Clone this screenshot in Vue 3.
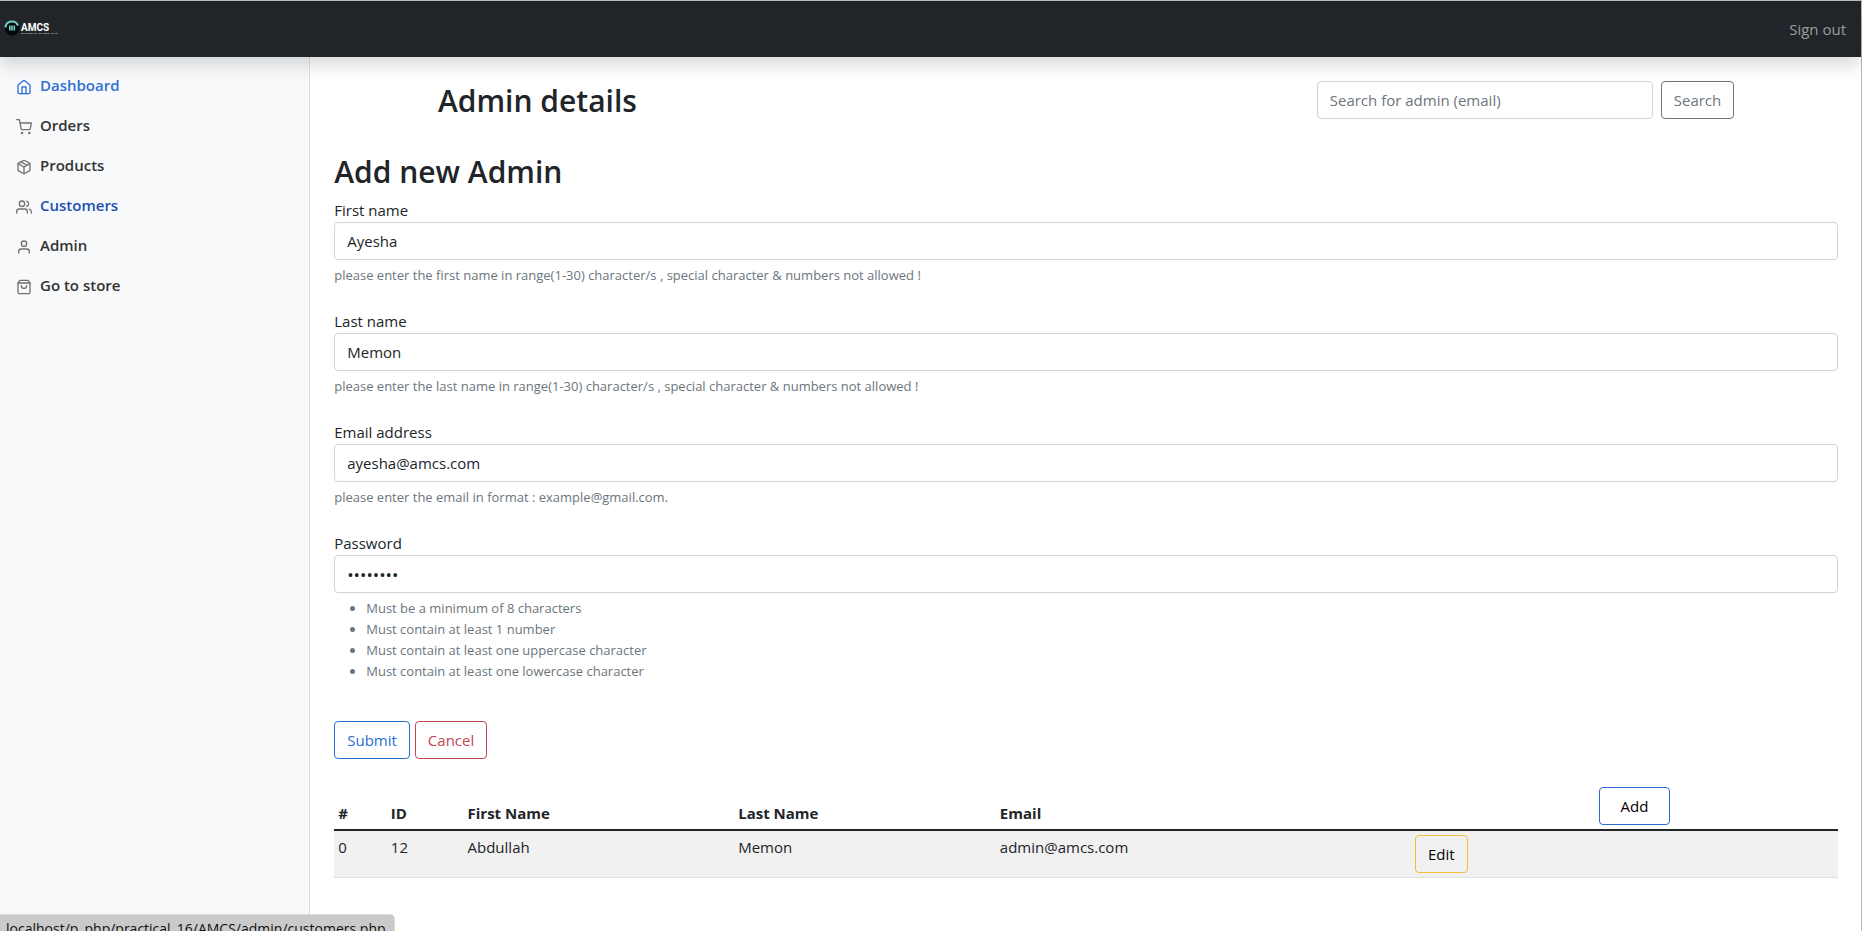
<script setup>
import { ref } from 'vue'

const links = [
  { label: 'Dashboard', state: 'active', paths: ['M3 9l9-7 9 7v11a2 2 0 0 1-2 2H5a2 2 0 0 1-2-2z', 'M9 22V12h6v10'] },
  { label: 'Orders', paths: ['M8 21a1 1 0 1 0 2 0a1 1 0 1 0-2 0', 'M19 21a1 1 0 1 0 2 0a1 1 0 1 0-2 0', 'M1 1h4l2.68 13.39a2 2 0 0 0 2 1.61h9.72a2 2 0 0 0 2-1.61L23 6H6'] },
  { label: 'Products', paths: ['M16.5 9.4l-9-5.19', 'M21 16V8a2 2 0 0 0-1-1.73l-7-4a2 2 0 0 0-2 0l-7 4A2 2 0 0 0 3 8v8a2 2 0 0 0 1 1.73l7 4a2 2 0 0 0 2 0l7-4A2 2 0 0 0 21 16z', 'M3.27 6.96L12 12.01l8.73-5.05', 'M12 22.08V12'] },
  { label: 'Customers', state: 'hovered', paths: ['M17 21v-2a4 4 0 0 0-4-4H5a4 4 0 0 0-4 4v2', 'M5 7a4 4 0 1 0 8 0a4 4 0 1 0-8 0', 'M23 21v-2a4 4 0 0 0-3-3.87', 'M16 3.13a4 4 0 0 1 0 7.75'] },
  { label: 'Admin', paths: ['M20 21v-2a4 4 0 0 0-4-4H8a4 4 0 0 0-4 4v2', 'M8 7a4 4 0 1 0 8 0a4 4 0 1 0-8 0'] },
  { label: 'Go to store', paths: ['M6 2L3 6v14a2 2 0 0 0 2 2h14a2 2 0 0 0 2-2V6l-3-4z', 'M3 6h18', 'M16 10a4 4 0 0 1-8 0'] },
]

const fields = ref([
  { id: 'first-name', label: 'First name', type: 'text', value: 'Ayesha', help: 'please enter the first name in range(1-30) character/s , special character & numbers not allowed !' },
  { id: 'last-name', label: 'Last name', type: 'text', value: 'Memon', help: 'please enter the last name in range(1-30) character/s , special character & numbers not allowed !' },
  { id: 'email', label: 'Email address', type: 'email', value: 'ayesha@amcs.com', help: 'please enter the email in format : example@gmail.com.' },
  {
    id: 'password', label: 'Password', type: 'password', value: 'Passw0rd',
    rules: ['Must be a minimum of 8 characters', 'Must contain at least 1 number', 'Must contain at least one uppercase character', 'Must contain at least one lowercase character'],
  },
])

const admins = [{ id: 12, first: 'Abdullah', last: 'Memon', email: 'admin@amcs.com' }]
</script>

<template>
  <div class="page">
    <header class="topbar">
      <a href="#" class="brand" aria-label="AMCS">
        <svg width="60" height="20" viewBox="0 0 60 20">
          <circle cx="12" cy="9" r="7.500" fill="#050809" />
          <path d="M5.500 8.500a6.500 6.500 0 0 1 12.500-2" fill="none" stroke="#72cfca" stroke-width="2" />
          <path d="M9.800 6.500v5M12 6.500v5M14.300 6.500v5" fill="none" stroke="#72cfca" stroke-width="1.600" />
          <text x="21" y="12" class="brand-name">AMCS</text>
          <path d="M21 14.500h37" stroke="#6c7174" stroke-width="1" stroke-dasharray="4 1 7 1 3 1" />
        </svg>
      </a>
      <a href="#" class="signout">Sign out</a>
    </header>

    <div class="body">
      <nav class="sidebar">
        <a v-for="link in links" :key="link.label" href="#" class="nav-link" :class="link.state">
          <svg class="icon" width="16" height="16" viewBox="0 0 24 24">
            <path v-for="d in link.paths" :key="d" :d="d" />
          </svg>
          <span>{{ link.label }}</span>
        </a>
      </nav>

      <main class="content">
        <div class="title-row">
          <h2>Admin details</h2>
          <form class="search" @submit.prevent>
            <input class="control" type="search" placeholder="Search for admin (email)" aria-label="Search for admin (email)">
            <button class="btn grey" type="submit">Search</button>
          </form>
        </div>

        <h2>Add new Admin</h2>
        <form class="admin-form" @submit.prevent>
          <div v-for="field in fields" :key="field.id" class="field">
            <label :for="field.id">{{ field.label }}</label>
            <input :id="field.id" v-model="field.value" class="control" :type="field.type">
            <ul v-if="field.rules" class="help">
              <li v-for="rule in field.rules" :key="rule">{{ rule }}</li>
            </ul>
            <div v-else class="help">{{ field.help }}</div>
          </div>
          <div class="actions">
            <button class="btn blue" type="submit">Submit</button>
            <button class="btn red" type="button">Cancel</button>
          </div>
        </form>

        <table>
          <colgroup>
            <col class="c-index"><col class="c-id"><col class="c-first"><col class="c-last"><col class="c-email"><col>
          </colgroup>
          <thead>
            <tr>
              <th>#</th><th>ID</th><th>First Name</th><th>Last Name</th><th>Email</th>
              <th class="add-cell"><button class="btn add" type="button">Add</button></th>
            </tr>
          </thead>
          <tbody>
            <tr v-for="(admin, i) in admins" :key="admin.id">
              <td>{{ i }}</td><td>{{ admin.id }}</td><td>{{ admin.first }}</td><td>{{ admin.last }}</td><td>{{ admin.email }}</td>
              <td><button class="btn edit" type="button">Edit</button></td>
            </tr>
          </tbody>
        </table>
      </main>
    </div>
    <div class="status">localhost/p_php/practical_16/AMCS/admin/customers.php</div>
  </div>
</template>

<style>
body { margin: 0; }
</style>

<style scoped>
* { box-sizing: border-box; }
.page {
  display: flex;
  flex-direction: column;
  min-height: 100vh;
  border-top: 1px solid #b5bfc0;
  border-right: 1px solid #b5b8ba;
  background: #fff;
  color: #212529;
  font-family: "Segoe UI", "Open Sans", "Noto Sans", sans-serif;
  font-size: 15px;
  line-height: 24px;
}
.topbar {
  display: flex;
  align-items: center;
  justify-content: space-between;
  height: 56px;
  padding-right: 15px;
  background: #212529;
  box-shadow: 0 8px 16px rgba(0, 0, 0, .15);
  position: relative;
  z-index: 1;
}
.brand svg { display: block; }
.brand-name { fill: #fff; font: bold 10px "Liberation Sans Narrow", "Roboto", sans-serif; }
.signout { color: #9b9d9f; text-decoration: none; }
.body { display: flex; flex: 1; }
.sidebar {
  flex: 0 0 16.67%;
  padding-top: 8px;
  border-right: 1px solid #dcdee0;
  background: #f8f9fb;
}
.nav-link {
  display: flex;
  align-items: center;
  gap: 8px;
  padding: 8px 16px;
  color: #333;
  font-weight: 600;
  text-decoration: none;
}
.icon {
  margin-top: 4px;
  fill: none;
  stroke: #727272;
  stroke-width: 2;
  stroke-linecap: round;
  stroke-linejoin: round;
}
.active { color: #2f70d0; }
.active .icon { stroke: #2f70d0; }
.hovered { color: #1c50b0; }
.content { flex: 1; min-width: 0; padding: 24px 23px 0 24px; }
h2 { margin: 0 0 6px; font-size: 30px; font-weight: 600; line-height: 40px; }
.title-row {
  display: flex;
  justify-content: space-between;
  align-items: flex-start;
  padding: 0 6.9%;
  margin-bottom: 31px;
}
.title-row h2 { margin: 0; }
.search { display: flex; gap: 8px; }
.search .control { width: 336px; }
.control {
  width: 100%;
  height: 38px;
  padding: 6px 12px;
  border: 1px solid #ced4da;
  border-radius: 4px;
  background: #fff;
  color: #212529;
  font: inherit;
}
.control[type="password"] { font-size: 17px; }
.control::placeholder { color: #6c757d; opacity: 1; }
.field { margin-bottom: 24px; }
label { display: block; }
.help { margin: 5px 0 -1px; color: #6c757d; font-size: 13px; line-height: 21px; }
ul.help { padding-left: 32px; }
.btn {
  height: 38px;
  padding: 6px 12px;
  border: 1px solid;
  border-radius: 4px;
  background: transparent;
  font: inherit;
  line-height: 24px;
}
.grey { color: #6c757d; }
.blue { color: #2a6dd0; }
.red { color: #c34655; }
.actions { display: flex; gap: 5px; padding-top: 16px; margin-bottom: 24px; }
table { width: 100%; table-layout: fixed; border-collapse: separate; border-spacing: 0; }
th, td { padding: 4px; text-align: left; }
th { border-bottom: 2px solid #212529; font-weight: 700; vertical-align: bottom; }
td { background: #f1f1f1; border-bottom: 1px solid #dee2e6; vertical-align: top; }
.c-index { width: 3.5%; }
.c-id { width: 5.1%; }
.c-first { width: 18%; }
.c-last { width: 17.4%; }
.c-email { width: 27.6%; }
.add-cell { padding-left: 24px; text-align: center; }
.add { padding: 6px 21px; border-color: #2a6dd0; color: #000; font-weight: 400; }
.edit { border-color: #f0bf38; color: #000; }
th .btn, td .btn { display: inline-block; vertical-align: top; }
.status {
  position: fixed;
  z-index: 2;
  left: 0;
  bottom: 0;
  height: 17px;
  padding: 2px 8px 0 6px;
  overflow: hidden;
  border-top: 1px solid #dcdcdc;
  border-right: 1px solid #dcdcdc;
  border-radius: 0 5px 0 0;
  background: #cacaca;
  color: #111;
  font-size: 14px;
}
</style>
